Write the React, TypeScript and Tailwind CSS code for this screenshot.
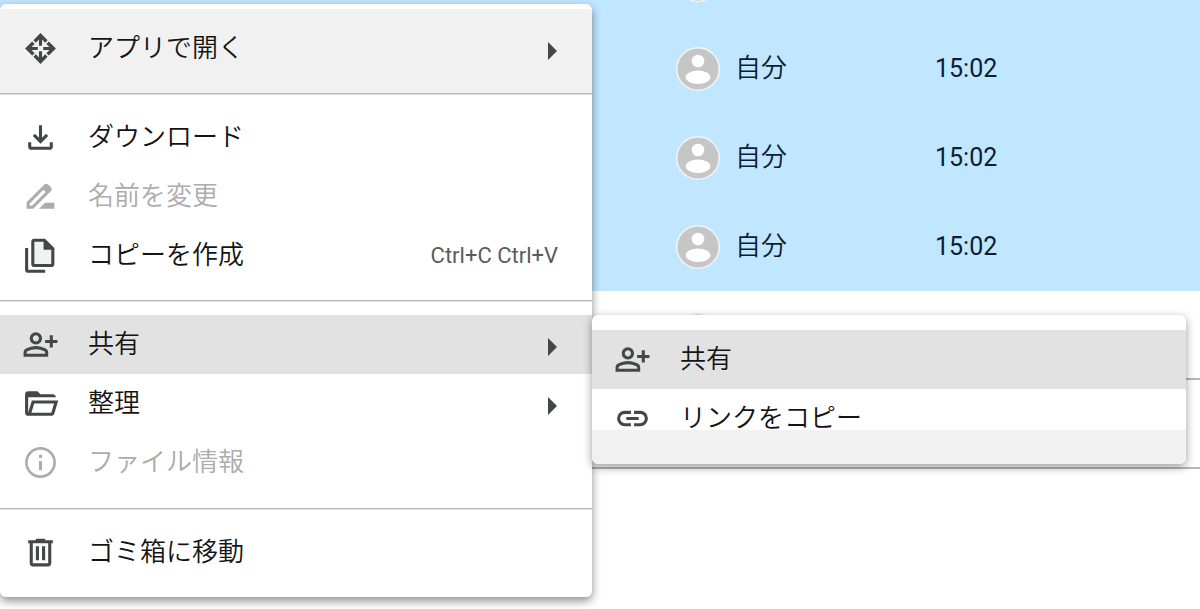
import type { ReactNode } from "react";

const ICONS = {
  openWith:
    "M12 2 7.4 6.6 9 8.2l2-2v4h2v-4l2 2 1.6-1.6ZM12 22l4.6-4.6-1.6-1.6-2 2v-4h-2v4l-2-2-1.6 1.6ZM2 12l4.6 4.6L8.2 15l-2-2h4v-2h-4l2-2-1.6-1.6ZM22 12l-4.6-4.6L15.8 9l2 2h-4v2h4l-2 2 1.6 1.6Z",
  download:
    "M12 16l-5-5 1.4-1.45 2.6 2.6V4h2v8.15l2.6-2.6L17 11l-5 5Zm-6 4q-.825 0-1.412-.587Q4 18.825 4 18v-3h2v3h12v-3h2v3q0 .825-.587 1.413Q18.825 20 18 20Z",
  rename:
    "M3 20v-4.3L14.2 4.5a2.2 2.2 0 0 1 3.1 0l1.2 1.2a2.2 2.2 0 0 1 0 3.1L7.3 20ZM5 18h1.5l8.9-8.9-1.5-1.5L5 16.5ZM11 20l4-4h6v4Z",
  personAdd:
    "M18 14v-3h-3V9h3V6h2v3h3v2h-3v3Zm-9-2q-1.65 0-2.825-1.175Q5 9.65 5 8q0-1.65 1.175-2.825Q7.35 4 9 4q1.65 0 2.825 1.175Q13 6.35 13 8q0 1.65-1.175 2.825Q10.65 12 9 12Zm-8 8v-2.8q0-.85.438-1.563.437-.712 1.162-1.087 1.55-.775 3.15-1.163Q7.35 13 9 13t3.25.387q1.6.388 3.15 1.163.725.375 1.162 1.087Q17 16.35 17 17.2V20Zm2-2h12v-.8q0-.275-.137-.5-.138-.225-.363-.35-1.35-.675-2.725-1.013Q10.4 15 9 15t-2.775.337Q4.85 15.675 3.5 16.35q-.225.125-.362.35-.138.225-.138.5Zm6-8q.825 0 1.413-.588Q11 8.825 11 8t-.587-1.412Q9.825 6 9 6q-.825 0-1.412.588Q7 7.175 7 8t.588 1.412Q8.175 10 9 10Z",
  folder:
    "M4 20q-.825 0-1.412-.587Q2 18.825 2 18V6q0-.825.588-1.412Q3.175 4 4 4h6l2 2h8q.825 0 1.413.588Q22 7.175 22 8H4v10l2.4-8h17.1l-2.575 8.575q-.2.65-.737 1.038Q19.65 20 19 20Zm2.1-2H19l1.8-6H7.9Z",
  info: "M11 17h2v-6h-2Zm0-8h2V7h-2Zm1 13a10 10 0 1 1 0-20 10 10 0 0 1 0 20Zm0-1.7a8.3 8.3 0 1 0 0-16.6 8.3 8.3 0 0 0 0 16.6Z",
  trash:
    "M7 21q-.825 0-1.412-.587Q5 19.825 5 19V6H4V4h5V3h6v1h5v2h-1v13q0 .825-.587 1.413Q17.825 21 17 21ZM17 6H7v13h10ZM9 17h2V8H9Zm4 0h2V8h-2Z",
  link: "M11 17H7q-2.075 0-3.537-1.463Q2 14.075 2 12t1.463-3.538Q4.925 7 7 7h4v2H7q-1.25 0-2.125.875T4 12q0 1.25.875 2.125T7 15h4Zm-3-4v-2h8v2Zm5 4v-2h4q1.25 0 2.125-.875T20 12q0-1.25-.875-2.125T17 9h-4V7h4q2.075 0 3.538 1.462Q22 9.925 22 12q0 2.075-1.462 3.537Q19.075 17 17 17Z",
};

function Icon({ name }: { name: keyof typeof ICONS }) {
  return (
    <svg viewBox="0 0 24 24" className="size-[37px] shrink-0" fill="currentColor" aria-hidden="true">
      <path fillRule="evenodd" d={ICONS[name]} />
    </svg>
  );
}

function CopyIcon() {
  return (
    <svg viewBox="0 0 24 24" className="size-[37px] shrink-0 overflow-visible" fill="none" aria-hidden="true">
      <path
        d="M8 2.1h6.5L20 7.6v9.9a1 1 0 0 1-1 1H8a1 1 0 0 1-1-1V3.1a1 1 0 0 1 1-1Z"
        fill="#f1f1f1"
        stroke="currentColor"
        strokeWidth="2"
      />
      <path d="M14 2v6.3h6.5Z" fill="currentColor" />
      <path d="M3 7.2v14a1 1 0 0 0 1 1h11" stroke="currentColor" strokeWidth="2" />
    </svg>
  );
}

function Avatar() {
  return (
    <svg viewBox="0 0 44 44" className="size-11 shrink-0" aria-hidden="true">
      <circle cx="22" cy="22" r="21.25" fill="#c6c6c6" stroke="#f4f4f4" strokeWidth="1.5" />
      <circle cx="22" cy="14" r="6.3" fill="#fff" />
      <ellipse cx="22" cy="30.3" rx="12.3" ry="6.7" fill="#fff" />
    </svg>
  );
}

type ItemProps = {
  icon: ReactNode;
  label: string;
  shortcut?: string;
  submenu?: boolean;
  active?: boolean;
  disabled?: boolean;
};

function MenuItem({ icon, label, shortcut, submenu, active, disabled }: ItemProps) {
  return (
    <button
      type="button"
      role="menuitem"
      disabled={disabled}
      aria-haspopup={submenu ? "menu" : undefined}
      className={`flex h-[59px] w-full items-center gap-[29px] pr-[34px] pl-[22px] text-left ${
        disabled ? "text-[#acacac]" : "text-[#444746]"
      } ${active ? "bg-[#e2e2e2]" : ""}`}
    >
      {icon}
      <span className={`flex-1 pb-[2px] text-[26px] leading-9 font-[350] ${disabled ? "" : "text-[#141414]"}`}>
        {label}
      </span>
      {shortcut && <span className="text-[22px] leading-6 text-[#5a5c5b]">{shortcut}</span>}
      {submenu && (
        <svg viewBox="0 0 10 22" className="h-[22px] w-[10px]" fill="currentColor" aria-hidden="true">
          <path d="M0 4l9 9L0 22Z" />
        </svg>
      )}
    </button>
  );
}

function Separator() {
  return <div role="separator" className="h-[2px] border-b border-[#e0e0e0] bg-[#b8b8b8]" />;
}

type FileRow = { owner?: string; time?: string; selected?: boolean };

const files: FileRow[] = [
  { selected: true },
  { owner: "自分", time: "15:02", selected: true },
  { owner: "自分", time: "15:02", selected: true },
  { owner: "自分", time: "15:02", selected: true },
  {},
  {},
];

export default function App() {
  return (
    <div className="relative min-h-screen overflow-hidden bg-white font-[Roboto,'Noto_Sans_CJK_JP',sans-serif] text-[#0b1d33]">
      {/* file list, scrolled under the menus */}
      <table className="-mt-[65px] w-full table-fixed border-separate border-spacing-0 leading-9">
        <colgroup>
          <col className="w-[676px]" />
          <col className="w-[259px]" />
          <col />
        </colgroup>
        <tbody>
          {files.map((file, i) => (
            <tr key={i} className={`h-[89px] ${file.selected ? "bg-[#c1e6ff]" : "bg-white"}`}>
              <td className={file.selected ? "" : "border-b-2 border-[#b8b8b8]"} />
              <td className={`p-0 ${file.selected ? "" : "border-b-2 border-[#b8b8b8]"}`}>
                <div className="flex items-center gap-[15px]">
                  <Avatar />
                  <span className="pb-[2px] text-[26px] font-[350]">{file.owner}</span>
                </div>
              </td>
              <td className={`p-0 text-[25px] ${file.selected ? "" : "border-b-2 border-[#b8b8b8]"}`}>
                {file.time}
              </td>
            </tr>
          ))}
        </tbody>
      </table>

      <div className="absolute inset-x-0 top-0 flex items-start">
        <div
          role="menu"
          className="mt-1 w-[592px] shrink-0 rounded-md bg-white pt-[5px] pb-[15px] shadow-[0_4px_10px_rgba(0,0,0,0.45)]"
        >
          <div className="bg-[#f1f1f1] pt-[10px] pb-[15px]">
            <MenuItem icon={<Icon name="openWith" />} label="アプリで開く" submenu />
          </div>
          <Separator />
          <div className="pt-[13px] pb-[15px]">
            <MenuItem icon={<Icon name="download" />} label="ダウンロード" />
            <MenuItem icon={<Icon name="rename" />} label="名前を変更" disabled />
            <MenuItem icon={<CopyIcon />} label="コピーを作成" shortcut="Ctrl+C Ctrl+V" />
          </div>
          <Separator />
          <div className="pt-[13px] pb-4">
            <MenuItem icon={<Icon name="personAdd" />} label="共有" submenu active />
            <MenuItem icon={<Icon name="folder" />} label="整理" submenu />
            <MenuItem icon={<Icon name="info" />} label="ファイル情報" disabled />
          </div>
          <Separator />
          <div className="pt-[13px]">
            <MenuItem icon={<Icon name="trash" />} label="ゴミ箱に移動" />
          </div>
        </div>

        {/* share submenu */}
        <div
          role="menu"
          className="relative mt-[315px] mr-[14px] flex-1 rounded-md bg-white pt-[15px] pb-4 shadow-[0_3px_10px_rgba(0,0,0,0.4)]"
        >
          <div className="absolute inset-x-0 bottom-0 h-[34px] rounded-b-md bg-[#f1f1f1]" />
          <div className="relative">
            <MenuItem icon={<Icon name="personAdd" />} label="共有" active />
            <MenuItem icon={<Icon name="link" />} label="リンクをコピー" />
          </div>
        </div>
      </div>
    </div>
  );
}
